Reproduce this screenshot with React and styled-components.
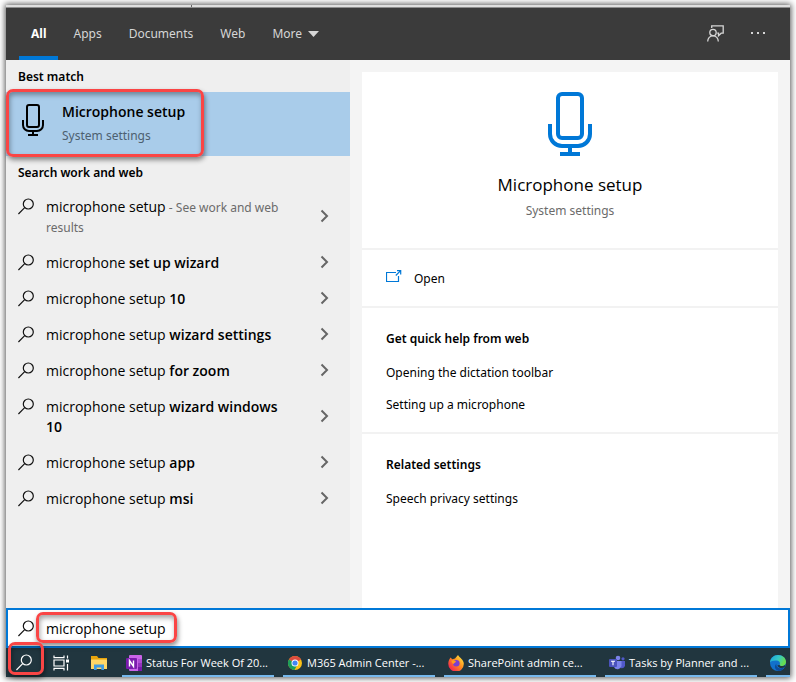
import { useState } from 'react';
import styled, { createGlobalStyle, css } from 'styled-components';

const GlobalStyle = createGlobalStyle`
  * {
    box-sizing: border-box;
  }

  body {
    margin: 0;
    background: #fff;
    font-family: 'Noto Sans', sans-serif;
    font-size: 12px;
    line-height: 20px;
    color: #000;
  }

  button, input {
    font: inherit;
    color: inherit;
    border: 0;
    margin: 0;
    padding: 0;
    background: none;
  }

  button {
    cursor: pointer;
  }

  a {
    color: inherit;
    text-decoration: none;
  }

  svg {
    display: block;
    flex: none;
  }

  h1, h2, ul {
    margin: 0;
    padding: 0;
    list-style: none;
  }
`

const titleFont = css`
  font-family: 'Open Sans', 'Noto Sans', sans-serif;
`

const Page = styled.div`
  display: flex;
  min-height: 100vh;
  padding: 5px 6px;
`

const Window = styled.div`
  flex: 1;
  min-width: 0;
  display: flex;
  flex-direction: column;
  box-shadow: 0 0 6px 1px #555;
`

const TopEdge = styled.div`
  height: 3px;
  padding-left: 185px;
  background: #dedede;
  border-bottom: 1px solid #8c8c8c;

  &::before {
    content: '';
    display: block;
    width: 1px;
    height: 2px;
    background: #666;
  }
`

const Header = styled.header`
  display: flex;
  justify-content: space-between;
  height: 52px;
  padding: 0 24px 0 13px;
  background: #3b3b3b;
  color: #d6d6d6;
`

const Tabs = styled.nav`
  display: flex;
  gap: 3px;
`

const Tab = styled.button`
  display: flex;
  align-items: center;
  gap: 6px;
  padding: 7px 12px 3px;
  border-bottom: 4px solid transparent;

  ${({ $active }) => $active && css`
    border-color: #0078d7;
    color: #fff;
    font-weight: 700;
  `}
`

const HeaderActions = styled.div`
  display: flex;
  align-items: center;
  gap: 26px;
  padding-bottom: 2px;
`

const Body = styled.main`
  flex: 1;
  display: grid;
  grid-template-columns: minmax(0, 344fr) minmax(0, 440fr);
  background: #f4f4f4;
`

const Results = styled.section`
  background: #efefef;
`

const GroupTitle = styled.h2`
  padding: 7px 12px 5px;
  font-size: 12px;
  font-weight: 600;
`

const Highlighted = styled.div`
  position: relative;
`

const BestMatch = styled.button`
  display: flex;
  align-items: center;
  gap: 18px;
  width: 100%;
  height: 64px;
  padding: 0 16px;
  background: #a9ccea;
  text-align: left;
`

const BestMatchIcon = styled.span`
  padding-bottom: 8px;
`

const BestMatchTitle = styled.span`
  display: block;
  margin-bottom: 4px;
  font-size: 14px;
  font-weight: 600;
  ${titleFont}
`

const Muted = styled.span`
  line-height: 16px;
  color: ${({ $color }) => $color || '#6b6b6b'};
`

const ResultRow = styled.button`
  display: flex;
  align-items: center;
  width: 100%;
  padding: 8px 20px 8px 12px;
  text-align: left;

  &:hover {
    background: #e2e2e2;
  }
`

const ResultText = styled.span`
  flex: 1;
  margin: 0 32px 0 12px;
  font-size: 14px;
  ${titleFont}

  b {
    font-weight: 600;
  }
`

const ResultNote = styled(Muted)`
  font-family: 'Noto Sans', sans-serif;
  font-size: 12px;
`

const ResultIcon = styled.span`
  align-self: flex-start;
  padding-top: 1px;
`

const ResultList = styled.div`
  padding-top: 1px;
`

const ResultArrow = styled.span`
  padding-bottom: 2px;
`

const Preview = styled.section`
  display: flex;
  padding: 12px 12px 0;
`

const Card = styled.div`
  flex: 1;
  min-width: 0;
  background: #fff;
`

const Hero = styled.div`
  display: flex;
  flex-direction: column;
  align-items: center;
  height: 176px;
  padding-top: 20px;
`

const HeroTitle = styled.h1`
  margin: 17px 0 6px;
  font-size: 17px;
  line-height: 24px;
  font-weight: 400;
  ${titleFont}
`

const OpenButton = styled.button`
  display: flex;
  align-items: center;
  gap: 12px;
  width: 100%;
  height: 58px;
  padding: 2px 24px 0;
  border-top: 2px solid #f2f2f2;
`

const LinkSection = styled.section`
  padding: 21px 24px 11px;
  border-top: 2px solid #f2f2f2;
`

const LinkTitle = styled.h2`
  margin-bottom: 8px;
  font-size: 12px;
  font-weight: 600;
`

const LinkItem = styled.li`
  padding: 6px 0;
`

const SearchBar = styled.label`
  display: flex;
  align-items: center;
  gap: 12px;
  height: 40px;
  padding: 0 10px;
  border: 2px solid #0078d7;
  background: #fff;
`

const InputWrap = styled.span`
  position: relative;
  flex: 1;
`

const SearchInput = styled.input`
  display: block;
  width: 100%;
  padding-top: 2px;
  font-size: 14px;
  outline: none;
  ${titleFont}
`

const Taskbar = styled.footer`
  display: flex;
  height: 29px;
  background: #21363f;
  color: #fff;
`

const TaskbarTools = styled.div`
  display: flex;
  flex: none;
  align-items: center;
  gap: 21px;
  padding: 0 15px 0 10px;
`

const ToolButton = styled.button`
  position: relative;
`

const TaskList = styled.div`
  flex: 1;
  min-width: 0;
  display: flex;
  gap: 9px;
  overflow: hidden;
`

const Task = styled.button`
  display: flex;
  flex: none;
  align-items: center;
  gap: 4px;
  width: 152px;
  padding: 2px 4px 0;
  border-bottom: 2px solid #76b9ed;
  font-size: 11px;
  white-space: nowrap;
  ${titleFont}
`

const Marker = styled.span`
  position: absolute;
  top: ${({ $top }) => $top}px;
  left: ${({ $left }) => $left}px;
  width: ${({ $width }) => $width}px;
  height: ${({ $height }) => $height}px;
  border: 3px solid #fa4545;
  border-radius: 7px;
  box-shadow: 1px 3px 5px rgba(0, 0, 0, 0.45), inset 1px 3px 5px rgba(0, 0, 0, 0.35);
  pointer-events: none;
`

const MicIcon = ({ width, height, color }) => (
  <svg width={width} height={height} viewBox="0 0 44 64" fill="none" stroke={color} strokeWidth="4">
    <rect x="10" y="2" width="24" height="44" rx="4" />
    <path d="M2 32v10a12 12 0 0 0 12 12h16a12 12 0 0 0 12-12V32M22 54v8M12 62h20" />
  </svg>
)

const SearchIcon = ({ color = '#111' }) => (
  <svg width="16" height="17" viewBox="0 0 16 17" fill="none" stroke={color} strokeWidth="1.2">
    <circle cx="10.3" cy="6" r="5" />
    <path d="M6.7 9.7L.4 16" />
  </svg>
)

const Chevron = () => (
  <svg width="10" height="14" viewBox="0 0 10 14" fill="none" stroke="#666" strokeWidth="2">
    <path d="M1.5 1.5L7 7l-5.500 5.500" />
  </svg>
)

const FeedbackIcon = () => (
  <svg width="17" height="17" viewBox="0 0 17 17" fill="none" stroke="#d6d6d6" strokeWidth="1.300">
    <circle cx="6" cy="7.500" r="3.200" />
    <path d="M.7 16.500c0-3.500 2.300-5.700 5.300-5.700s5.300 2.200 5.300 5.700M4.700 3V.8h11.500v7.400h-2l-2.700 2.500V8.200h-1.300" />
  </svg>
)

const MoreIcon = () => (
  <svg width="16" height="4" viewBox="0 0 16 4" fill="#d6d6d6">
    <path d="M1 1h2v2H1zM7 1h2v2H7zM13 1h2v2h-2z" />
  </svg>
)

const OpenIcon = () => (
  <svg width="16" height="18" viewBox="0 0 16 18" fill="none" stroke="#0078d7" strokeWidth="1.200">
    <path d="M10 2.500H.5v9h12V6M9.800 5.500L14.400.9M11 .7h3.700v3.700" />
  </svg>
)

const TaskViewIcon = () => (
  <svg width="17" height="16" viewBox="0 0 17 16" fill="none" stroke="#fff" strokeWidth="1.200">
    <path d="M1 .5v2.200h10V.5M1 15.500v-2.200h10v2.200M1 5h10v6H1zM14.500.5v3M14.500 9v6.500" />
    <path d="M13 4.500h3v3h-3z" fill="#fff" stroke="none" />
  </svg>
)

const FolderIcon = () => (
  <svg width="16" height="14" viewBox="0 0 16 14">
    <path d="M0 0h6l1.500 2H16v11H0z" fill="#e8a40c" />
    <path d="M0 3.500h16V13H0z" fill="#ffd766" />
    <path d="M3 14V8.500h10V14h-2.700v-2.500H5.700V14z" fill="#3f9be0" />
  </svg>
)

const OneNoteIcon = () => (
  <svg width="16" height="16" viewBox="0 0 16 16">
    <rect x="3" width="13" height="16" rx="1" fill="#ca64ea" />
    <path d="M12 4h4v4h-4z" fill="#ae4bd5" />
    <path d="M12 8h4v4h-4z" fill="#9332bf" />
    <path d="M12 12h4v4h-4z" fill="#7719aa" />
    <rect y="3" width="11" height="11" rx="1" fill="#7a1bad" />
    <path d="M3.500 11.500v-6l4 6v-6" fill="none" stroke="#fff" strokeWidth="1.400" />
  </svg>
)

const ChromeIcon = () => (
  <svg width="16" height="16" viewBox="0 0 16 16">
    <circle cx="8" cy="8" r="7" fill="#fbc116" />
    <path d="M8 8L1.900 4.500A7 7 0 0 1 14.100 4.500z" fill="#dd4b3e" />
    <path d="M8 8L1.900 4.500A7 7 0 0 0 7.500 15L10.500 9.500z" fill="#1a9e5c" />
    <circle cx="8" cy="8" r="3.500" fill="#fff" />
    <circle cx="8" cy="8" r="2.600" fill="#4285f4" />
  </svg>
)

const FirefoxIcon = () => (
  <svg width="16" height="16" viewBox="0 0 16 16">
    <defs>
      <linearGradient id="fox" x1="1" y1="0" x2="0" y2="1">
        <stop offset="0.1" stopColor="#ffe53f" />
        <stop offset="0.45" stopColor="#ff8a1e" />
        <stop offset="0.85" stopColor="#f5284f" />
      </linearGradient>
    </defs>
    <path d="M2.500 2.500l1.800 1.800L7 3.500 10 0c1 2 2.500 2.500 3.500 4 1 1 2.500 3 2.300 5A7.700 7.700 0 0 1 .3 8.800C.2 6 1.500 4 2.500 2.500z" fill="url(#fox)" />
    <circle cx="8.300" cy="8.300" r="3.300" fill="#7a3fd0" />
    <path d="M3.500 5.500c2-.8 3.500 0 4.500 1-.3 1.300-2 1-2.300 2.500-1.700-.5-2.200-2-2.200-3.500z" fill="#ff9a1f" />
  </svg>
)

const TeamsIcon = () => (
  <svg width="16" height="16" viewBox="0 0 16 16">
    <circle cx="9" cy="3" r="2.300" fill="#7b83eb" />
    <circle cx="14" cy="3.800" r="1.600" fill="#5059c9" />
    <path d="M11 6h5v4.500a3 3 0 0 1-4 2.500z" fill="#5059c9" />
    <path d="M5 6h7.500v5A4 4 0 0 1 5 12z" fill="#7b83eb" />
    <rect y="4" width="8" height="8" rx="1" fill="#4b53bc" />
    <path d="M2 6.200h4M4 6.200v4" stroke="#fff" strokeWidth="1.100" />
  </svg>
)

const EdgeIcon = () => (
  <svg width="16" height="16" viewBox="0 0 16 16">
    <defs>
      <linearGradient id="wave" x1="0" y1="0" x2="1" y2="0.400">
        <stop offset="0" stopColor="#1ba0dc" />
        <stop offset="0.550" stopColor="#35c8c5" />
        <stop offset="1" stopColor="#68dc4c" />
      </linearGradient>
    </defs>
    <circle cx="8" cy="8" r="8" fill="#1271cc" />
    <path d="M0 7.500C.3 3.300 3.700 0 8 0c4.700 0 8 3.200 8 7 0 2.700-2 4-4 4-1.500 0-2.700-.6-2.400-1.300.9-1 .4-3.900-2.600-4.200C3.500 5.200.8 6 0 7.500z" fill="url(#wave)" />
    <path d="M6.500 8.500c-1 3 2 5.500 5 4.800 1.500-.2 2.500-.9 3.200-1.300A8 8 0 0 1 9 16c-4-.7-5.500-4.500-2.500-7.500z" fill="#0c4a9c" />
    <path d="M9.600 9.700c-.3.700.9 1.300 2.400 1.300 1.500 0 2.500-.5 3.300-1.500l-.5 2.500c-3 2-6.500 1-7.500-1.500z" fill="#21363f" />
  </svg>
)

const tabs = ['All', 'Apps', 'Documents', 'Web', 'More'];

const suggestions = [
  { text: 'microphone setup', note: ' - See work and web results' },
  { text: 'microphone ', bold: 'set up wizard' },
  { text: 'microphone setup ', bold: '10' },
  { text: 'microphone setup ', bold: 'wizard settings' },
  { text: 'microphone setup ', bold: 'for zoom' },
  { text: 'microphone setup ', bold: 'wizard windows 10' },
  { text: 'microphone setup ', bold: 'app' },
  { text: 'microphone setup ', bold: 'msi' },
];

const linkGroups = [
  { title: 'Get quick help from web', links: ['Opening the dictation toolbar', 'Setting up a microphone'] },
  { title: 'Related settings', links: ['Speech privacy settings'] },
];

const tasks = [
  { icon: <OneNoteIcon />, title: 'Status For Week Of 20...' },
  { icon: <ChromeIcon />, title: 'M365 Admin Center -...' },
  { icon: <FirefoxIcon />, title: 'SharePoint admin ce...' },
  { icon: <TeamsIcon />, title: 'Tasks by Planner and ...' },
  { icon: <EdgeIcon />, title: '' },
];

function App() {
  const [tab, setTab] = useState('All');
  const [query, setQuery] = useState('microphone setup');

  return (
    <Page>
      <GlobalStyle />
      <Window>
        <TopEdge />
        <Header>
          <Tabs>
            {tabs.map(name => (
              <Tab key={name} $active={name === tab} onClick={() => setTab(name)}>
                {name}
                {name === 'More' && (
                  <svg width="11" height="6" viewBox="0 0 11 6" fill="#d6d6d6"><path d="M0 0h11L5.500 6z" /></svg>
                )}
              </Tab>
            ))}
          </Tabs>
          <HeaderActions>
            <button aria-label="Feedback"><FeedbackIcon /></button>
            <button aria-label="Options"><MoreIcon /></button>
          </HeaderActions>
        </Header>

        <Body>
          <Results>
            <GroupTitle>Best match</GroupTitle>
            <Highlighted>
              <BestMatch>
                <BestMatchIcon><MicIcon width={22} height={32} color="#000" /></BestMatchIcon>
                <span>
                  <BestMatchTitle>Microphone setup</BestMatchTitle>
                  <Muted $color="#4d6070">System settings</Muted>
                </span>
              </BestMatch>
              <Marker $top={-3} $left={0} $width={198} $height={68} />
            </Highlighted>
            <GroupTitle>Search work and web</GroupTitle>
            <ResultList>
              {suggestions.map(({ text, bold, note }) => (
                <ResultRow key={text + bold}>
                  <ResultIcon><SearchIcon /></ResultIcon>
                  <ResultText>
                    {text}
                    {bold && <b>{bold}</b>}
                    {note && <ResultNote>{note}</ResultNote>}
                  </ResultText>
                  <ResultArrow><Chevron /></ResultArrow>
                </ResultRow>
              ))}
            </ResultList>
          </Results>

          <Preview>
            <Card>
              <Hero>
                <MicIcon width={44} height={64} color="#0078d7" />
                <HeroTitle>Microphone setup</HeroTitle>
                <Muted>System settings</Muted>
              </Hero>
              <OpenButton><OpenIcon />Open</OpenButton>
              {linkGroups.map(group => (
                <LinkSection key={group.title}>
                  <LinkTitle>{group.title}</LinkTitle>
                  <ul>
                    {group.links.map(link => (
                      <LinkItem key={link}><a href="#">{link}</a></LinkItem>
                    ))}
                  </ul>
                </LinkSection>
              ))}
            </Card>
          </Preview>
        </Body>

        <SearchBar>
          <SearchIcon />
          <InputWrap>
            <SearchInput aria-label="Search" value={query} onChange={e => setQuery(e.target.value)} />
            <Marker $top={-5} $left={-10} $width={141} $height={31} />
          </InputWrap>
        </SearchBar>

        <Taskbar>
          <TaskbarTools>
            <ToolButton aria-label="Search">
              <SearchIcon color="#fff" />
              <Marker $top={-12} $left={-8} $width={36} $height={33} />
            </ToolButton>
            <ToolButton aria-label="Task view"><TaskViewIcon /></ToolButton>
            <ToolButton aria-label="File Explorer"><FolderIcon /></ToolButton>
          </TaskbarTools>
          <TaskList>
            {tasks.map(({ icon, title }) => (
              <Task key={title} aria-label={title || 'Microsoft Edge'}>
                {icon}
                {title}
              </Task>
            ))}
          </TaskList>
        </Taskbar>
      </Window>
    </Page>
  )
}

export default App;
